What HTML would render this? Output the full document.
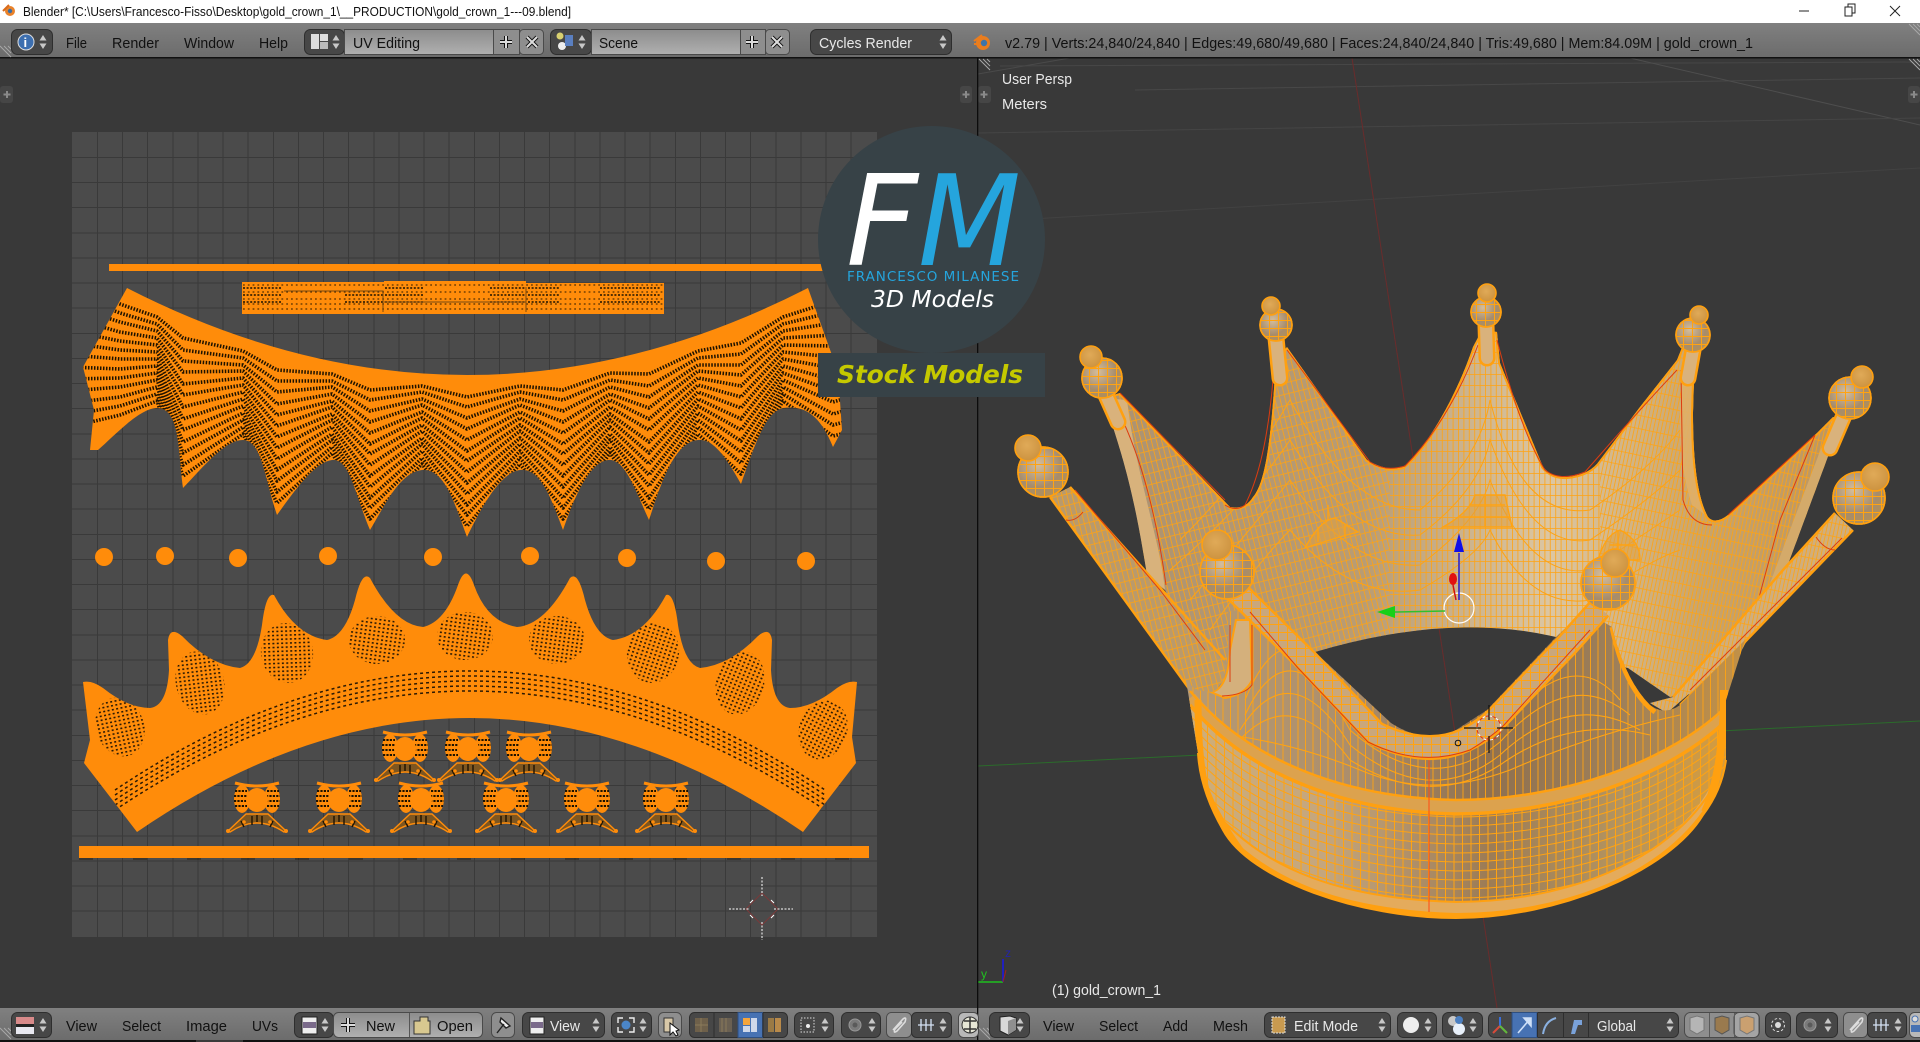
<!DOCTYPE html>
<html><head><meta charset="utf-8"><title>Blender</title>
<style>
html,body{margin:0;padding:0;background:#393939;overflow:hidden}
svg{display:block}
text{font-family:"Liberation Sans",sans-serif;font-size:14.5px;fill:#111}
.w{fill:#e8e8e8}
.d{fill:#474747;stroke:#2e2e2e}
.l{fill:url(#lg);stroke:#4a4a4a}
.g{fill:#8e8e8e;stroke:#4a4a4a}
</style></head><body>
<svg xmlns="http://www.w3.org/2000/svg" width="1920" height="1042" viewBox="0 0 1920 1042">
<defs>
<linearGradient id="hd" x1="0" y1="0" x2="0" y2="1"><stop offset="0" stop-color="#808080"/><stop offset="1" stop-color="#6c6c6c"/></linearGradient>
<linearGradient id="lg" x1="0" y1="0" x2="0" y2="1"><stop offset="0" stop-color="#8c8c8c"/><stop offset="1" stop-color="#b0b0b0"/></linearGradient>
<linearGradient id="back" x1="1100" y1="0" x2="1850" y2="0" gradientUnits="userSpaceOnUse"><stop offset="0" stop-color="#ab9272"/><stop offset=".35" stop-color="#b89c74"/><stop offset=".6" stop-color="#dcc6a2"/><stop offset=".8" stop-color="#c9a56c"/><stop offset="1" stop-color="#ba9460"/></linearGradient>
<linearGradient id="front" x1="1190" y1="0" x2="1730" y2="0" gradientUnits="userSpaceOnUse"><stop offset="0" stop-color="#b69a74"/><stop offset=".3" stop-color="#ab8e6c"/><stop offset=".55" stop-color="#8e7050"/><stop offset=".8" stop-color="#9e805a"/><stop offset="1" stop-color="#c09048"/></linearGradient>
<linearGradient id="bandg" x1="1190" y1="0" x2="1730" y2="0" gradientUnits="userSpaceOnUse"><stop offset="0" stop-color="#cfae78"/><stop offset=".25" stop-color="#c4a67e"/><stop offset=".55" stop-color="#9c7c56"/><stop offset=".8" stop-color="#b39460"/><stop offset="1" stop-color="#d69c3c"/></linearGradient>
<radialGradient id="ball" cx=".4" cy=".35" r=".75"><stop offset="0" stop-color="#d4bd9c"/><stop offset=".6" stop-color="#a68c6c"/><stop offset="1" stop-color="#b8914f"/></radialGradient>
<radialGradient id="cap" cx=".45" cy=".4" r=".7"><stop offset="0" stop-color="#e0aa58"/><stop offset="1" stop-color="#c98f3c"/></radialGradient>
<pattern id="pB" width="5.4" height="11" patternUnits="userSpaceOnUse"><path d="M.5 0V11M0 .5H5.4" stroke="#ffa312" stroke-width=".8" fill="none"/></pattern>
<pattern id="pBl" width="5" height="11" patternUnits="userSpaceOnUse" patternTransform="rotate(-14)"><path d="M.5 0V11M0 .5H5" stroke="#ffa312" stroke-width=".8" fill="none"/></pattern>
<pattern id="pBr" width="3.8" height="13" patternUnits="userSpaceOnUse" patternTransform="rotate(12)"><path d="M.5 0V13M0 .5H3.8" stroke="#ffa312" stroke-width=".8" fill="none"/></pattern>
<pattern id="pF" width="7.5" height="8" patternUnits="userSpaceOnUse"><path d="M.5 0V8" stroke="#ffa312" stroke-width=".9" fill="none"/></pattern>
<pattern id="pBd" width="8.5" height="8" patternUnits="userSpaceOnUse"><path d="M.5 0V8" stroke="#ffa312" stroke-width="1" fill="none"/></pattern>
<pattern id="pBall" width="9" height="8" patternUnits="userSpaceOnUse"><path d="M.5 0V8M0 .5H9" stroke="#ffa312" stroke-width="1" fill="none"/></pattern>
<pattern id="dots" width="4.4" height="4" patternUnits="userSpaceOnUse" patternTransform="rotate(8)"><rect width="2" height="1.6" fill="#2c1a04"/></pattern>
<clipPath id="cUp"><path d="M127,288 Q467,462 808,288 L838,372 L842,430 L833,447 C820,415 805,405 783,408 C765,412 755,445 741,484 C725,455 712,438 698,440 C675,442 662,480 649,520 C635,490 625,458 608,460 C590,462 575,495 563,530 C550,495 540,468 520,470 C500,472 480,510 467,537 C455,505 445,468 422,470 C400,472 385,505 370,530 C355,495 350,458 332,460 C315,462 295,490 277,515 C265,480 262,440 243,440 C225,440 205,465 183,488 C178,450 180,408 157,408 C140,408 115,435 98,450 L90,450 L94,410 L83,367 Z"/></clipPath>
<path id="low" d="M83,682 Q92,680 103,688 Q128,708 150,708 Q167,706 169,670 L168,640 Q170,626 182,636 Q210,665 240,668 Q256,664 262,625 Q266,592 274,595 Q296,636 327,640 Q345,636 355,600 Q362,570 370,578 Q395,625 423,627 Q445,622 458,585 Q466,562 474,585 Q487,622 517,627 Q545,625 570,578 Q578,570 585,600 Q595,636 613,640 Q644,636 666,595 Q674,592 678,625 Q684,664 700,668 Q730,665 758,636 Q770,626 772,640 L771,670 Q773,706 790,708 Q812,708 837,688 Q848,680 857,682 L852,737 L856,763 L803,832 Q470,604 137,832 L84,763 L90,740 Z"/>
<clipPath id="cLow"><use href="#low"/></clipPath>
<path id="ribbon" d="M115,800 Q470,562 825,800" fill="none" stroke="#2c1a04" stroke-width="1.5" stroke-dasharray="3 3"/>
<g id="fl">
<path d="M-11,6 L-29,23 L-27,24 Q0,6 27,24 L29,23 L11,6 Z" fill="#7e5620" stroke="#ff8c0a" stroke-width="1.4"/>
<path d="M-5,8 V17 M5,8 V17 M-16,13 L-13,19 M16,13 L13,19 M0,7 V14" stroke="#1d1200" stroke-width="1.4"/>
<path d="M-22,-25 Q0,-19 22,-25" fill="none" stroke="#ff8c0a" stroke-width="3"/>
<ellipse cx="-15" cy="-9" rx="8" ry="14" fill="#ff8c0a"/><ellipse cx="15" cy="-9" rx="8" ry="14" fill="#ff8c0a"/>
<path d="M-22,-17H-10M-23,-12H-9M-23,-7H-9M-22,-2H-10M10,-17H22M9,-12H23M9,-7H23M10,-2H22" stroke="#1d1200" stroke-width="2" stroke-dasharray="2.2 1.2"/>
<ellipse cx="0" cy="-8" rx="11" ry="12" fill="#ff8c0a"/>
<circle cx="-29" cy="23" r="2" fill="#ff8c0a"/><circle cx="29" cy="23" r="2" fill="#ff8c0a"/>
<circle cx="-13" cy="14" r="1.8" fill="#ff8c0a"/><circle cx="13" cy="14" r="1.8" fill="#ff8c0a"/>
</g>
<g id="ud"><path d="M-3.5,-1.5 L0,-7 L3.5,-1.5Z M-3.5,1.5 L0,7 L3.5,1.5Z" fill="#c8c8c8"/></g>
<g id="hatch"><path d="M0,0 L11,11 M4,0 L11,7 M8,0 L11,3" stroke="#a8a8a8" fill="none"/></g>
<path id="bc" d="M1190,715 C1250,785 1350,815 1456,817 C1560,817 1670,785 1730,725" fill="none" stroke="#ffa312" stroke-width="1"/>
<clipPath id="cBack"><path d="M1103,398 L1120,393 L1230,507 Q1245,510 1253,497 C1268,480 1272,420 1276,360 L1287,347 L1367,460 Q1387,472 1403,467 C1425,450 1455,400 1473,347 L1482,330 L1497,332 L1500,363 L1543,467 Q1552,478 1567,477 Q1590,475 1600,460 L1640,407 L1677,360 L1685,340 L1695,345 L1693,413 Q1693,490 1708,517 Q1715,525 1728,515 L1817,433 L1833,417 L1847,420 L1833,443 L1787,567 L1720,690 L1670,697 L1628,668 L1590,660 L1556,637 Q1450,612 1315,652 L1240,690 L1190,640 L1165,590 L1147,575 C1135,500 1125,460 1103,398 Z"/></clipPath>
<clipPath id="cFront"><path d="M1186,680 L1196,690 L1211,692 Q1225,690 1228,650 L1228,612 L1260,605 L1315,652 L1391,723 Q1425,745 1456,730 L1487,710 L1556,637 L1577,617 L1600,620 L1612,627 Q1625,680 1650,705 Q1665,716 1680,705 L1745,640 L1726,700 L1726,760 Q1722,790 1703,815 C1670,870 1560,918 1456,918 C1360,918 1250,880 1223,830 Q1200,790 1198,753 Z"/></clipPath>
</defs>

<rect width="1920" height="1042" fill="#393939"/>
<!-- title bar -->
<rect width="1920" height="23" fill="#fff"/>
<circle cx="10" cy="11" r="5" fill="#e9822a"/><circle cx="10" cy="11" r="2.2" fill="#3b6ea5"/><path d="M3,11 L9,5" stroke="#d86a1a" stroke-width="2"/>
<text x="23" y="16" style="font-size:12.5px" textLength="548" lengthAdjust="spacingAndGlyphs">Blender* [C:\Users\Francesco-Fisso\Desktop\gold_crown_1\__PRODUCTION\gold_crown_1---09.blend]</text>
<path d="M1799,11 H1809" stroke="#222"/>
<path d="M1845,7 h7 v9 h-7z M1848,7 v-3 h7 v9 h-3" fill="none" stroke="#222"/>
<path d="M1890,6 L1900,16 M1900,6 L1890,16" stroke="#222"/>

<!-- UV editor image -->
<rect x="72" y="132" width="805" height="805" fill="#4b4b4b"/>
<g stroke="#3a3a3a" stroke-width="1">
<path d="M97.5,132V937M122.5,132V937M147.5,132V937M173,132V937M198,132V937M223,132V937M248,132V937M273.5,132V937M298.5,132V937M323.5,132V937M348.5,132V937M374,132V937M399,132V937M424,132V937M449,132V937M474.5,132V937M499.5,132V937M524.5,132V937M549.5,132V937M575,132V937M600,132V937M625,132V937M650,132V937M675.5,132V937M700.5,132V937M725.5,132V937M750.5,132V937M776,132V937M801,132V937M826,132V937M851,132V937"/>
<path d="M72,157.5H877M72,182.5H877M72,207.5H877M72,233H877M72,258H877M72,283H877M72,308H877M72,333.5H877M72,358.5H877M72,383.5H877M72,408.5H877M72,434H877M72,459H877M72,484H877M72,509H877M72,534.5H877M72,559.5H877M72,584.5H877M72,609.5H877M72,635H877M72,660H877M72,685H877M72,710H877M72,735.5H877M72,760.5H877M72,785.5H877M72,810.5H877M72,836H877M72,861H877M72,886H877M72,911H877"/>
</g>

<!-- UV islands -->
<rect x="109" y="264" width="715" height="7" fill="#ff8c0a"/>
<g>
<rect x="242" y="282" width="142" height="32" fill="#ff8c0a"/><rect x="384" y="281" width="142" height="33" fill="#ff8c0a"/><rect x="526" y="283" width="138" height="31" fill="#ff8c0a"/>
<path d="M243,285H664M243,292H664M243,299H664M243,304H664M243,309H664" stroke="#1d1200" stroke-width="1.3" stroke-dasharray="1.8 3" opacity=".75"/>
<path d="M243,288H282M243,295H282M243,302H282M345,295H383M345,302H383M385,288H424M385,295H424M385,302H424M490,288H525M490,295H525M490,302H525M528,288H560M528,295H560M528,302H560M600,288H660M600,295H660M600,302H660" stroke="#1d1200" stroke-width="1.6" stroke-dasharray="2 1.6"/>
<path d="M284,291H383V312M384,302H526M526,287V312" stroke="#7a4a10" fill="none"/>
</g>
<g clip-path="url(#cUp)">
<rect x="70" y="280" width="800" height="270" fill="#ff8c0a"/>
<g stroke="#1d1200" stroke-width="3.6" stroke-dasharray="1.5 1.5" fill="none" stroke-linejoin="round">
<polyline points="70,282 120,304 157,317 183,338 243,351 277,370 332,374 370,390 422,386 467,397 520,386 563,390 610,373 649,374 698,351 741,343 783,317 833,301 870,282"/>
<polyline points="70,294 120,313 157,324 183,350 243,358 277,381 332,381 370,400 422,392 467,407 520,392 563,400 610,380 649,386 698,358 741,354 783,324 833,312 870,294"/>
<polyline points="70,306 120,322 157,331 183,361 243,365 277,392 332,387 370,411 422,399 467,418 520,399 563,411 610,387 649,397 698,365 741,365 783,331 833,323 870,306"/>
<polyline points="70,318 120,332 157,338 183,372 243,371 277,404 332,394 370,422 422,405 467,429 520,405 563,422 610,394 649,408 698,371 741,375 783,338 833,335 870,318"/>
<polyline points="70,331 120,341 157,345 183,384 243,378 277,415 332,401 370,433 422,412 467,440 520,412 563,433 610,400 649,419 698,378 741,386 783,345 833,346 870,331"/>
<polyline points="70,343 120,350 157,352 183,395 243,385 277,426 332,407 370,444 422,418 467,451 520,418 563,444 610,407 649,430 698,385 741,397 783,352 833,357 870,343"/>
<polyline points="70,355 120,359 157,359 183,407 243,392 277,437 332,414 370,454 422,425 467,461 520,425 563,454 610,414 649,442 698,392 741,408 783,359 833,368 870,355"/>
<polyline points="70,367 120,369 157,366 183,419 243,399 277,448 332,420 370,465 422,431 467,472 520,431 563,465 610,420 649,453 698,399 741,419 783,366 833,380 870,367"/>
<polyline points="70,379 120,378 157,373 183,430 243,406 277,459 332,427 370,476 422,438 467,483 520,438 563,476 610,427 649,464 698,406 741,430 783,373 833,391 870,379"/>
<polyline points="70,391 120,387 157,380 183,442 243,413 277,470 332,434 370,487 422,444 467,494 520,444 563,487 610,434 649,475 698,413 741,441 783,380 833,402 870,391"/>
<polyline points="70,403 120,397 157,387 183,453 243,420 277,481 332,440 370,498 422,451 467,505 520,451 563,498 610,440 649,486 698,420 741,452 783,387 833,414 870,403"/>
<polyline points="70,415 120,406 157,394 183,465 243,427 277,492 332,447 370,508 422,458 467,515 520,458 563,508 610,447 649,498 698,427 741,463 783,394 833,425 870,415"/>
<polyline points="70,427 120,415 157,401 183,476 243,434 277,503 332,453 370,519 422,464 467,526 520,464 563,519 610,453 649,509 698,434 741,474 783,401 833,436 870,427"/>
</g>
</g>
<g fill="#ff8c0a"><circle cx="104" cy="557" r="9"/><circle cx="165" cy="556" r="9"/><circle cx="238" cy="558" r="9"/><circle cx="328" cy="556" r="9"/><circle cx="433" cy="557" r="9"/><circle cx="530" cy="556" r="9"/><circle cx="627" cy="558" r="9"/><circle cx="716" cy="561" r="9"/><circle cx="806" cy="561" r="9"/></g>
<use href="#low" fill="#ff8c0a"/>
<g clip-path="url(#cLow)">
<g fill="url(#dots)">
<ellipse cx="120" cy="727" rx="24" ry="30" transform="rotate(-20 120 727)"/>
<ellipse cx="200" cy="683" rx="24" ry="32" transform="rotate(-15 200 683)"/>
<ellipse cx="287" cy="653" rx="26" ry="30" transform="rotate(-10 287 653)"/>
<ellipse cx="377" cy="640" rx="28" ry="24"/>
<ellipse cx="465" cy="636" rx="28" ry="24"/>
<ellipse cx="557" cy="640" rx="28" ry="24"/>
<ellipse cx="653" cy="653" rx="26" ry="30" transform="rotate(10 653 653)"/>
<ellipse cx="740" cy="683" rx="24" ry="32" transform="rotate(15 740 683)"/>
<ellipse cx="823" cy="730" rx="24" ry="30" transform="rotate(20 823 730)"/>
</g>
<use href="#ribbon" y="-10"/><use href="#ribbon" y="-5"/><use href="#ribbon"/><use href="#ribbon" y="5"/><use href="#ribbon" y="10"/>
</g>
<use href="#fl" x="257" y="808"/><use href="#fl" x="339" y="808"/><use href="#fl" x="421" y="808"/><use href="#fl" x="506" y="808"/><use href="#fl" x="587" y="808"/><use href="#fl" x="666" y="808"/>
<use href="#fl" x="405" y="757"/><use href="#fl" x="468" y="757"/><use href="#fl" x="529" y="757"/>
<rect x="79" y="846" width="790" height="12" fill="#ff8c0a"/>
<path d="M79,859H869" stroke="#1d1200" stroke-dasharray="14 40" opacity=".7"/>
<!-- 2D cursor -->
<g fill="none">
<path d="M762,893 L778,909 L762,925 L746,909 Z" stroke="#7a3a3a"/>
<path d="M729,909H750M774,909H793M762,877V896M762,922V940" stroke="#fff" stroke-dasharray="2 1.5"/>
<path d="M753,900L750,903M771,900L774,903M753,918L750,915M771,918L774,915" stroke="#fff"/>
</g>

<!-- 3D viewport background lines -->
<g fill="none" stroke-width="1">
<path d="M978,74 L1070,58" stroke="#4a4a4a"/>
<path d="M1000,66 L1920,62" stroke="#474747"/>
<path d="M1135,90 L1920,78" stroke="#484848"/>
<path d="M1630,58 L1920,125" stroke="#4e4e4e"/>
<path d="M978,133 L1920,118" stroke="#454545"/>
<path d="M978,222 L1920,168" stroke="#424242"/>
<path d="M1352,58 L1497,1008" stroke="#6a2c2c"/>
<path d="M978,766 L1200,755 M1720,731 L1920,721" stroke="#2b6b2b"/>
</g>

<!-- crown back -->
<g clip-path="url(#cBack)">
<rect x="1090" y="320" width="770" height="400" fill="url(#back)"/>
<rect x="1090" y="320" width="300" height="400" fill="url(#pBl)"/>
<rect x="1390" y="320" width="210" height="400" fill="url(#pB)"/>
<rect x="1600" y="320" width="260" height="400" fill="url(#pBr)"/>
<g fill="none" stroke="#ffa312" stroke-width="1">
<path d="M1180,540 Q1250,470 1290,400 Q1350,510 1420,510 Q1480,460 1490,400 Q1520,520 1590,510 Q1650,470 1680,430"/>
<path d="M1170,570 Q1250,500 1290,440 Q1350,540 1420,535 Q1480,490 1490,440 Q1530,550 1590,540 Q1650,500 1680,470"/>
<path d="M1190,600 Q1250,530 1290,480 Q1350,570 1420,565 Q1480,520 1490,480 Q1530,580 1590,570 Q1650,530 1680,510"/>
<path d="M1210,630 Q1260,560 1290,530 Q1350,600 1420,590 Q1480,555 1490,530 Q1530,610 1590,600 Q1650,560 1680,550"/>
</g>
<path d="M1127,400 C1135,470 1160,540 1165,590 L1147,575 C1135,500 1125,460 1103,398Z" fill="#d8b27c"/>
<path d="M1682,360 L1695,345 L1693,413 Q1693,490 1708,517 L1692,505 Q1680,470 1680,420Z" fill="#dfaf68" opacity=".9"/>
<path d="M1833,417 L1847,420 L1833,443 L1787,567 L1760,610 L1790,530Z" fill="#d4aa6a"/>
<path d="M1103,398 L1120,393 L1230,507 Q1245,510 1253,497 C1268,480 1272,420 1276,360 L1287,347 L1367,460 Q1387,472 1403,467 C1425,450 1455,400 1473,347 L1482,330 L1497,332 L1500,363 L1543,467 Q1552,478 1567,477 Q1590,475 1600,460 L1640,407 L1677,360 L1685,340 M1695,345 L1693,413 Q1693,490 1708,517 Q1715,525 1728,515 L1817,433 L1833,417" fill="none" stroke="#ffa010" stroke-width="4"/>
<g fill="#e0a040" fill-opacity=".55" stroke="#ffa312" stroke-width="1.4">
<path d="M1305,548 Q1320,520 1335,518 L1358,532 Q1335,538 1305,548 Z M1328,505 V520 M1318,527 V542 M1345,525 V538"/>
<path d="M1443,527 Q1470,512 1475,495 L1505,495 L1512,527 Z M1470,505 H1505 M1460,517 H1510 M1485,495 V527"/>
<path d="M1598,560 Q1605,535 1620,530 Q1640,540 1640,560 Z M1610,545 H1635 M1618,530 V560"/>
</g>
</g>
<path d="M1115,405 Q1150,470 1166,585 M1274,365 Q1268,460 1245,505 Q1236,512 1225,505 M1120,393 L1225,500 M1287,350 L1370,462 Q1385,472 1405,466 Q1450,420 1478,345 M1497,340 Q1520,430 1545,470 Q1560,482 1585,472 Q1630,420 1677,370 M1681,370 L1683,500 Q1690,525 1712,525 M1815,435 L1780,520 L1757,605 M1728,515 L1815,435" fill="none" stroke="#dd3c10" stroke-width="1"/>

<!-- necks -->
<g fill="none" stroke-linecap="round">
<path d="M1276,338 L1280,378 M1486,325 L1487,358 M1693,350 L1688,378 M1106,395 L1118,422 M1845,413 L1830,448" stroke="#ffa010" stroke-width="17"/>
<path d="M1276,338 L1280,378 M1486,325 L1487,358 M1693,350 L1688,378 M1106,395 L1118,422 M1845,413 L1830,448" stroke="#d9b27c" stroke-width="12"/>
</g>

<!-- arm 1 -->
<path d="M1050,497 L1070,487 L1147,573 L1230,670 L1210,700 L1190,690 Z" fill="#b99a6c"/>
<path d="M1050,497 L1070,487 L1147,573 L1230,670 L1210,700 L1190,690 Z" fill="url(#pBl)"/>
<path d="M1070,487 L1147,573 L1225,660 M1050,497 L1190,690" fill="none" stroke="#ffa010" stroke-width="2.5"/>
<path d="M1066,520 Q1075,522 1083,512 M1075,490 L1160,590 L1205,650" fill="none" stroke="#dd3c10" stroke-width="1"/>
<!-- arm 7 -->
<path d="M1835,513 L1853,530 L1830,553 L1740,647 L1713,673 L1667,713 L1650,703 L1673,697 L1783,570 Z" fill="#d0ae7c"/>
<path d="M1835,513 L1853,530 L1830,553 L1740,647 L1713,673 L1667,713 L1650,703 L1673,697 L1783,570 Z" fill="url(#pBr)"/>
<path d="M1835,513 L1783,570 L1673,697 M1853,530 L1740,647 L1680,705" fill="none" stroke="#ffa010" stroke-width="2.5"/>
<path d="M1816,537 Q1825,550 1835,550 M1842,538 L1730,650 L1690,690" fill="none" stroke="#dd3c10" stroke-width="1"/>

<!-- crown front -->
<g clip-path="url(#cFront)">
<rect x="1180" y="600" width="570" height="330" fill="url(#front)"/>
<rect x="1180" y="600" width="570" height="330" fill="url(#pF)"/>
<g fill="none" stroke="#ffa312" stroke-width="1.1">
<path d="M1245,700 Q1290,590 1350,715 Q1430,790 1500,730 Q1570,640 1620,700"/>
<path d="M1245,715 Q1290,620 1350,730 Q1430,800 1500,742 Q1570,665 1630,715"/>
<path d="M1240,730 Q1290,650 1350,745 Q1430,810 1500,755 Q1570,690 1640,730"/>
<path d="M1235,745 Q1290,680 1350,760 Q1430,810 1500,765 Q1570,715 1650,735"/>
<path d="M1230,735 Q1300,745 1360,770 Q1430,800 1510,770 Q1590,735 1680,715"/>
</g>
<path d="M1190,698 C1250,770 1350,805 1456,807 C1560,807 1670,770 1730,710 L1730,930 L1190,930 Z" fill="url(#bandg)"/>
<path d="M1190,698 C1250,770 1350,805 1456,807 C1560,807 1670,770 1730,710 L1730,930 L1190,930 Z" fill="url(#pBd)"/>
<use href="#bc"/><use href="#bc" y="9"/><use href="#bc" y="18"/><use href="#bc" y="27"/><use href="#bc" y="36"/><use href="#bc" y="45"/><use href="#bc" y="54"/><use href="#bc" y="63"/><use href="#bc" y="72"/><use href="#bc" y="81"/>
<path d="M1190,698 C1250,770 1350,805 1456,807 C1560,807 1670,770 1730,710" fill="none" stroke="#dca24e" stroke-width="13"/>
<path d="M1190,691 C1250,763 1350,798 1456,800 C1560,800 1670,763 1730,703" fill="none" stroke="#ffa010" stroke-width="2.5"/>
<path d="M1190,705 C1250,777 1350,812 1456,814 C1560,814 1670,777 1730,717" fill="none" stroke="#ffa010" stroke-width="3.5"/>
<path d="M1205,805 C1260,880 1350,905 1456,908 C1560,908 1670,870 1715,790" fill="none" stroke="#e4ab5c" stroke-width="11"/>
<path d="M1205,799 C1260,874 1350,899 1456,902 C1560,902 1670,864 1715,784" fill="none" stroke="#ffa010" stroke-width="2"/>
<path d="M1205,812 C1260,887 1350,913 1456,916 C1560,916 1670,878 1715,797" fill="none" stroke="#ffa010" stroke-width="6"/>
<path d="M1198,700 Q1198,760 1206,790 Q1215,815 1240,850" fill="none" stroke="#ffa010" stroke-width="7"/>
<path d="M1724,690 Q1724,770 1705,812" fill="none" stroke="#ffa010" stroke-width="8"/>
<path d="M1612,627 Q1625,690 1655,712" fill="none" stroke="#ffa010" stroke-width="5"/>
<path d="M1236,620 L1250,620 L1252,680 Q1245,695 1225,698 L1211,692 Q1228,690 1230,650 Z" fill="#d4b07c" stroke="#ffa010" stroke-width="2"/>
<path d="M1230,625 V682 M1252,625 V685 Q1245,695 1222,696" fill="none" stroke="#dd3c10"/>
<path d="M1429,760 V912" stroke="#ff4a12" stroke-width="1"/>
</g>
<path d="M1198,753 Q1200,790 1223,830 C1250,880 1360,918 1456,918 C1560,918 1670,870 1703,815 Q1722,790 1726,760" fill="none" stroke="#ffa010" stroke-width="2"/>

<!-- balls back -->
<g stroke="#ffa010" stroke-width="1.6">
<g><circle cx="1693" cy="335" r="17" fill="url(#ball)"/><circle cx="1693" cy="335" r="17" fill="url(#pBall)"/><circle cx="1699" cy="315" r="9" fill="url(#cap)"/></g>
<g><circle cx="1486" cy="312" r="15" fill="url(#ball)"/><circle cx="1486" cy="312" r="15" fill="url(#pBall)"/><circle cx="1487" cy="293" r="9" fill="url(#cap)"/></g>
<g><circle cx="1276" cy="325" r="16" fill="url(#ball)"/><circle cx="1276" cy="325" r="16" fill="url(#pBall)"/><circle cx="1271" cy="306" r="9" fill="url(#cap)"/></g>
<g><circle cx="1102" cy="378" r="20" fill="url(#ball)"/><circle cx="1102" cy="378" r="20" fill="url(#pBall)"/><circle cx="1091" cy="357" r="11" fill="url(#cap)"/></g>
<g><circle cx="1043" cy="472" r="25" fill="url(#ball)"/><circle cx="1043" cy="472" r="25" fill="url(#pBall)"/><circle cx="1028" cy="448" r="13" fill="url(#cap)"/></g>
<g><circle cx="1850" cy="398" r="21" fill="url(#ball)"/><circle cx="1850" cy="398" r="21" fill="url(#pBall)"/><circle cx="1862" cy="377" r="11" fill="url(#cap)"/></g>
<g><circle cx="1859" cy="498" r="26" fill="url(#ball)"/><circle cx="1859" cy="498" r="26" fill="url(#pBall)"/><circle cx="1875" cy="477" r="14" fill="url(#cap)"/></g>
</g>
<!-- rim of front arms -->
<g fill="none" stroke-linejoin="round">
<path d="M1235,590 L1306,660 L1375,733 Q1425,758 1465,740 Q1485,730 1497,718 L1566,646 L1600,608" stroke="#ffa010" stroke-width="25"/>
<path d="M1235,590 L1306,660 L1375,733 Q1425,758 1465,740 Q1485,730 1497,718 L1566,646 L1600,608" stroke="#c9a77c" stroke-width="20"/>
<path d="M1235,590 L1306,660 L1375,733 Q1425,758 1465,740 Q1485,730 1497,718 L1566,646 L1600,608" stroke="url(#pBall)" stroke-width="20"/>
<path d="M1250,612 L1298,668 L1368,742 Q1420,768 1470,750 Q1490,738 1504,725 L1590,630" stroke="#dd3c10"/>
</g>
<g stroke="#ffa010" stroke-width="1.6">
<g><circle cx="1227" cy="572" r="27" fill="url(#ball)"/><circle cx="1227" cy="572" r="27" fill="url(#pBall)"/><circle cx="1217" cy="545" r="15" fill="url(#cap)"/></g>
<g><circle cx="1608" cy="583" r="27" fill="url(#ball)"/><circle cx="1608" cy="583" r="27" fill="url(#pBall)"/><circle cx="1615" cy="563" r="14" fill="url(#cap)"/></g>
</g>

<!-- manipulator -->
<circle cx="1459" cy="608" r="15" fill="none" stroke="#fff" stroke-width="1.2"/>
<path d="M1459,600 V553" stroke="#1a1ae0" stroke-width="1.5"/><path d="M1454,552 L1459,533 L1464,552Z" fill="#1010e8"/>
<path d="M1445,611 L1395,612" stroke="#2fc02f" stroke-width="1.5"/><path d="M1377,612 L1395,606 L1395,618Z" fill="#18d018"/>
<path d="M1456,600 L1453,585" stroke="#d01010" stroke-width="1.5"/><ellipse cx="1453" cy="579" rx="4" ry="6" fill="#e01010"/>
<!-- 3D cursor -->
<circle cx="1489" cy="728" r="12" fill="none" stroke="#fff" stroke-dasharray="4 3"/>
<circle cx="1489" cy="728" r="12" fill="none" stroke="#e03010" stroke-dasharray="4 3" stroke-dashoffset="3.5"/>
<path d="M1464,728H1481M1497,728H1513M1489,705V720M1489,736V753" stroke="#111" stroke-width="1.2"/>
<circle cx="1458" cy="743" r="2.8" fill="none" stroke="#111"/>

<!-- viewport text -->
<text class="w" x="1002" y="84" textLength="70" lengthAdjust="spacingAndGlyphs">User Persp</text>
<text class="w" x="1002" y="109" textLength="45" lengthAdjust="spacingAndGlyphs">Meters</text>
<text class="w" x="1052" y="995" textLength="109" lengthAdjust="spacingAndGlyphs">(1) gold_crown_1</text>
<path d="M978,982 H1003" stroke="#1fc01f" stroke-width="1.6"/><path d="M1003,982 V959" stroke="#1a1ae0" stroke-width="1.6"/><path d="M1003,982 L1006,970" stroke="#a02020"/>
<text x="981" y="978" style="font-size:12px;fill:#20c020">y</text>
<text x="1005" y="957" style="font-size:12px;fill:#2424a8">z</text>

<!-- side tabs -->
<g fill="#464646"><rect x="0" y="86" width="13" height="17" rx="3"/><rect x="960" y="86" width="12" height="17" rx="3"/><rect x="978" y="86" width="13" height="17" rx="3"/><rect x="1908" y="86" width="12" height="17" rx="3"/></g>
<g fill="#8a8a8a"><path d="M7,91v7M3.5,94.5h7" stroke="#8a8a8a" stroke-width="2"/><path d="M966,91v7M962.5,94.5h7" stroke="#8a8a8a" stroke-width="2"/><path d="M984,91v7M980.5,94.5h7" stroke="#8a8a8a" stroke-width="2"/><path d="M1914,91v7M1910.5,94.5h7" stroke="#8a8a8a" stroke-width="2"/></g>

<!-- header -->
<rect x="0" y="23" width="1920" height="34" fill="url(#hd)"/>
<rect x="0" y="57" width="1920" height="1.5" fill="#111"/>
<rect x="977" y="57" width="1.3" height="983" fill="#0c0c0c"/>
<use href="#hatch" x="0" y="46"/><use href="#hatch" x="1909" y="24"/><use href="#hatch" x="979" y="59"/><use href="#hatch" x="1909" y="59"/>
<rect class="d" x="11.5" y="29.5" width="41" height="25" rx="6"/>
<circle cx="26" cy="42" r="8" fill="#3d6fb0" stroke="#ddd"/><text x="23.5" y="47" style="font-size:13px;font-weight:bold;fill:#fff">i</text>
<use href="#ud" x="43" y="42"/>
<text x="66" y="48" textLength="21" lengthAdjust="spacingAndGlyphs">File</text>
<text x="112" y="48" textLength="47" lengthAdjust="spacingAndGlyphs">Render</text>
<text x="184" y="48" textLength="50" lengthAdjust="spacingAndGlyphs">Window</text>
<text x="259" y="48" textLength="29" lengthAdjust="spacingAndGlyphs">Help</text>

<rect class="d" x="304.5" y="29.5" width="40" height="25" rx="6"/>
<rect x="311" y="34" width="8" height="15" fill="#ddd"/><rect x="320" y="34" width="8" height="7" fill="#ddd"/><rect x="320" y="42" width="8" height="7" fill="#bbb"/>
<use href="#ud" x="336" y="42"/>
<rect class="l" x="344.5" y="29.5" width="149" height="25"/>
<text x="353" y="48" textLength="67" lengthAdjust="spacingAndGlyphs">UV Editing</text>
<rect class="g" x="493.5" y="29.5" width="26" height="25"/><rect class="g" x="519.5" y="29.5" width="24" height="25" rx="4"/>
<path d="M506,36v12M500,42h12" stroke="#111" stroke-width="4"/><path d="M506,36v12M500,42h12" stroke="#ddd" stroke-width="2"/>
<path d="M527,37l10,10M537,37l-10,10" stroke="#111" stroke-width="4"/><path d="M527,37l10,10M537,37l-10,10" stroke="#ddd" stroke-width="2"/>

<rect class="d" x="550.5" y="29.5" width="41" height="25" rx="6"/>
<circle cx="560" cy="36" r="3.5" fill="#d8d070"/><circle cx="562" cy="46" r="4" fill="#eee"/><rect x="565" y="35" width="8" height="11" fill="#5a7fc0"/>
<use href="#ud" x="582" y="42"/>
<rect class="l" x="591.5" y="29.5" width="149" height="25"/>
<text x="599" y="48" textLength="39" lengthAdjust="spacingAndGlyphs">Scene</text>
<rect class="g" x="740.5" y="29.5" width="25" height="25"/><rect class="g" x="765.5" y="29.5" width="24" height="25" rx="4"/>
<path d="M752,36v12M746,42h12" stroke="#111" stroke-width="4"/><path d="M752,36v12M746,42h12" stroke="#ddd" stroke-width="2"/>
<path d="M772,37l10,10M782,37l-10,10" stroke="#111" stroke-width="4"/><path d="M772,37l10,10M782,37l-10,10" stroke="#ddd" stroke-width="2"/>

<rect class="d" x="810.5" y="29.5" width="141" height="25" rx="6"/>
<text class="w" x="819" y="48" textLength="93" lengthAdjust="spacingAndGlyphs">Cycles Render</text>
<use href="#ud" x="943" y="42"/>

<circle cx="983" cy="43" r="7" fill="#ea7d1e"/><circle cx="984" cy="43" r="3.2" fill="#3f74a8"/><path d="M974,41 L982,35 M974,44 L979,44" stroke="#ea7d1e" stroke-width="2"/>
<text x="1005" y="48" textLength="748" lengthAdjust="spacingAndGlyphs">v2.79 | Verts:24,840/24,840 | Edges:49,680/49,680 | Faces:24,840/24,840 | Tris:49,680 | Mem:84.09M | gold_crown_1</text>

<!-- footer -->
<rect x="0" y="1008" width="1920" height="32" fill="url(#hd)"/>
<rect x="0" y="1040" width="1920" height="2" fill="#111"/>
<rect x="196" y="1040" width="47" height="2" fill="#3a3a3a"/>
<rect x="977" y="1008" width="1.3" height="32" fill="#0c0c0c"/>
<use href="#hatch" x="0" y="1028"/><use href="#hatch" x="979" y="1028"/>

<rect class="d" x="11.5" y="1012.5" width="40" height="25" rx="6"/>
<rect x="16" y="1017" width="18" height="7" fill="#d88a8a"/><rect x="16" y="1024" width="18" height="3" fill="#222"/><rect x="16" y="1027" width="18" height="7" fill="#e8e8f0"/>
<use href="#ud" x="43" y="1025"/>
<text x="66" y="1031" textLength="31" lengthAdjust="spacingAndGlyphs">View</text>
<text x="122" y="1031" textLength="39" lengthAdjust="spacingAndGlyphs">Select</text>
<text x="186" y="1031" textLength="41" lengthAdjust="spacingAndGlyphs">Image</text>
<text x="252" y="1031" textLength="26" lengthAdjust="spacingAndGlyphs">UVs</text>

<rect class="d" x="294.5" y="1012.5" width="39" height="25" rx="6"/>
<rect x="302" y="1017" width="15" height="17" fill="#eee" stroke="#222"/><rect x="303" y="1022" width="13" height="6" fill="#7a6a8a"/>
<use href="#ud" x="325" y="1025"/>
<rect class="l" x="333.5" y="1012.5" width="149" height="25" rx="5"/>
<path d="M348,1018v14M341,1025h14" stroke="#111" stroke-width="4"/><path d="M348,1018v14M341,1025h14" stroke="#ddd" stroke-width="2"/>
<text x="366" y="1031" textLength="29" lengthAdjust="spacingAndGlyphs">New</text>
<path d="M409.5,1013v24" stroke="#555"/>
<path d="M414,1021h6v-4h8v4h2v13h-16z" fill="#d8c890" stroke="#333"/>
<text x="437" y="1031" textLength="36" lengthAdjust="spacingAndGlyphs">Open</text>

<rect class="g" x="491.5" y="1012.5" width="23" height="25" rx="5"/>
<path d="M497,1033 L504,1024 M501,1018 L510,1026 L506,1028 L500,1022Z" stroke="#222" fill="#eee" stroke-width="1.4"/>
<rect class="d" x="522.5" y="1012.5" width="82" height="25" rx="6"/>
<rect x="530" y="1017" width="14" height="17" fill="#eee" stroke="#222"/><rect x="531" y="1022" width="12" height="6" fill="#7a6a8a"/>
<text class="w" x="550" y="1031" textLength="30" lengthAdjust="spacingAndGlyphs">View</text>
<use href="#ud" x="596" y="1025"/>
<rect class="d" x="611.5" y="1012.5" width="40" height="25" rx="6"/>
<circle cx="626" cy="1025" r="4.5" fill="#4b86c8"/><path d="M618,1023v-5h5M634,1023v-5h-5M618,1027v5h5M634,1027v5h-5" fill="none" stroke="#eee" stroke-width="1.4"/>
<use href="#ud" x="643" y="1025"/>
<rect class="g" x="658.5" y="1012.5" width="23" height="25" rx="5"/>
<path d="M664,1018h9v14h-9z" fill="#d8c8a8" stroke="#333"/><path d="M670,1023 L670,1035 L673,1032 L676,1036 L678,1035 L676,1031 L679,1030Z" fill="#fff" stroke="#111"/>
<rect class="d" x="689.5" y="1012.5" width="98" height="25" rx="5"/>
<rect x="738" y="1012.5" width="24.5" height="25" fill="#4772b3" stroke="#2e4f80"/>
<path d="M714,1013v24M763,1013v24" stroke="#2e2e2e"/>
<rect x="695" y="1018" width="13" height="14" fill="#6e604a"/><path d="M695,1025h13M701,1018v14" stroke="#8a7a5a"/>
<rect x="719" y="1018" width="13" height="14" fill="#6a6052"/><path d="M722,1018v14M726,1018v14" stroke="#8a7a5a"/>
<rect x="743" y="1018" width="7" height="7" fill="#f5a53c"/><rect x="743" y="1026" width="7" height="6" fill="#cfd8ea"/><rect x="751" y="1018" width="6" height="14" fill="#cfd8ea"/><rect x="768" y="1018" width="6" height="14" fill="#9b7a45"/><rect x="775" y="1018" width="6" height="14" fill="#b98a4a"/>
<rect class="d" x="794.5" y="1012.5" width="39" height="25" rx="6"/>
<rect x="801" y="1018" width="13" height="14" fill="none" stroke="#ddd" stroke-dasharray="1.5 1.5"/><circle cx="808" cy="1026" r="2" fill="#eee"/>
<use href="#ud" x="825" y="1025"/>
<rect class="d" x="841.5" y="1012.5" width="39" height="25" rx="6"/>
<circle cx="855" cy="1025" r="6" fill="#7a7a7a" stroke="#999"/><circle cx="855" cy="1025" r="2.5" fill="#5a5a5a"/>
<use href="#ud" x="872" y="1025"/>
<rect class="g" x="886.5" y="1012.5" width="25" height="25" rx="5"/>
<path d="M893,1030 L903,1019 Q907,1016 905,1022 L897,1031 Q893,1034 895,1029 L902,1022" fill="none" stroke="#ddd" stroke-width="1.6"/>
<rect class="d" x="911.5" y="1012.5" width="40" height="25" rx="5"/>
<path d="M918,1025h16M921,1019v12M926,1019v12M931,1019v12" stroke="#d5e3f5" stroke-width="1.3"/>
<use href="#ud" x="943" y="1025"/>
<rect class="g" x="958.5" y="1012.5" width="20" height="25" rx="5" style="fill:#b8b8b8"/>
<circle cx="970" cy="1025" r="8" fill="#e6e6d6" stroke="#333"/><path d="M964,1021h12M964,1029h12M970,1017v16" stroke="#333" stroke-width="1.5"/>

<rect class="d" x="989.5" y="1012.5" width="40" height="25" rx="6"/>
<path d="M1000,1017 L1010,1016 L1016,1018 L1016,1030 L1008,1035 L1000,1031Z" fill="#d8d8d8" stroke="#222"/><path d="M1008,1035 V1021 L1016,1018 V1030Z" fill="#8f8f8f"/>
<use href="#ud" x="1020" y="1025"/>
<text x="1043" y="1031" textLength="31" lengthAdjust="spacingAndGlyphs">View</text>
<text x="1099" y="1031" textLength="39" lengthAdjust="spacingAndGlyphs">Select</text>
<text x="1163" y="1031" textLength="25" lengthAdjust="spacingAndGlyphs">Add</text>
<text x="1213" y="1031" textLength="35" lengthAdjust="spacingAndGlyphs">Mesh</text>

<rect class="d" x="1264.5" y="1012.5" width="126" height="25" rx="6"/>
<rect x="1272" y="1017" width="13" height="16" fill="#c89a50" stroke="#ddd" stroke-dasharray="2 1"/>
<text class="w" x="1294" y="1031" textLength="64" lengthAdjust="spacingAndGlyphs">Edit Mode</text>
<use href="#ud" x="1382" y="1025"/>
<rect class="d" x="1397.5" y="1012.5" width="39" height="25" rx="6"/>
<circle cx="1411" cy="1025" r="8" fill="#eee"/><use href="#ud" x="1428" y="1025"/>
<rect class="d" x="1442.5" y="1012.5" width="40" height="25" rx="6"/>
<circle cx="1453" cy="1021" r="5" fill="#c8c8c8"/><circle cx="1459" cy="1029" r="6" fill="#e8f0fa"/><circle cx="1459" cy="1020" r="4" fill="#4a7ec0"/>
<use href="#ud" x="1473" y="1025"/>
<rect class="d" x="1488.5" y="1012.5" width="190" height="25" rx="6"/>
<rect x="1512" y="1012.5" width="25" height="25" fill="#4772b3" stroke="#2e4f80"/>
<path d="M1563.5,1013v24M1588.5,1013v24M1537.5,1013v24" stroke="#2e2e2e"/>
<path d="M1500,1026 V1017" stroke="#3a6fd8" stroke-width="2"/><path d="M1500,1026 L1493,1033" stroke="#d84a3a" stroke-width="2"/><path d="M1500,1026 L1507,1033" stroke="#64b83c" stroke-width="2"/>
<path d="M1518,1033 L1530,1019 M1524,1018 H1531 V1026 Z" stroke="#cfe0f8" fill="#cfe0f8" stroke-width="1.6"/>
<path d="M1543,1034 Q1545,1021 1556,1018" fill="none" stroke="#8ab0e0" stroke-width="2"/>
<path d="M1571,1034 L1574,1020 H1582 V1025 H1578 L1575,1034Z" fill="#7aa2da"/>
<text class="w" x="1597" y="1031" textLength="39" lengthAdjust="spacingAndGlyphs">Global</text>
<use href="#ud" x="1670" y="1025"/>
<rect class="g" x="1684.5" y="1012.5" width="75" height="25" rx="6"/>
<rect x="1734" y="1012.5" width="25" height="25" rx="5" fill="#a4a4a4" stroke="#4a4a4a"/>
<path d="M1709.5,1013v24M1734.5,1013v24" stroke="#5a5a5a"/>
<path d="M1690,1018 L1697,1016 L1704,1018 V1030 L1697,1034 L1690,1030Z" fill="#b5b5b5" stroke="#777"/>
<path d="M1715,1018 L1722,1016 L1729,1018 V1030 L1722,1034 L1715,1030Z" fill="#9a7a4e" stroke="#555"/>
<path d="M1740,1018 L1747,1016 L1754,1018 V1030 L1747,1034 L1740,1030Z" fill="#caa070" stroke="#777"/>
<rect class="d" x="1765.5" y="1012.5" width="25" height="25" rx="6"/>
<circle cx="1778" cy="1025" r="6.5" fill="none" stroke="#ddd" stroke-dasharray="2.5 2"/><circle cx="1778" cy="1025" r="3" fill="#ddd"/>
<rect class="d" x="1796.5" y="1012.5" width="41" height="25" rx="6"/>
<circle cx="1810" cy="1025" r="6" fill="#7a7a7a" stroke="#999"/><circle cx="1810" cy="1025" r="2.5" fill="#5a5a5a"/>
<use href="#ud" x="1828" y="1025"/>
<rect class="g" x="1843.5" y="1012.5" width="24" height="25" rx="5"/>
<path d="M1850,1030 L1860,1019 Q1864,1016 1862,1022 L1854,1031 Q1850,1034 1852,1029 L1859,1022" fill="none" stroke="#ddd" stroke-width="1.6"/>
<rect class="d" x="1867.5" y="1012.5" width="39" height="25" rx="5"/>
<path d="M1873,1025h16M1876,1019v12M1881,1019v12M1886,1019v12" stroke="#d5e3f5" stroke-width="1.3"/>
<use href="#ud" x="1898" y="1025"/>
<rect class="g" x="1909.5" y="1012.5" width="15" height="25" rx="5" style="fill:#b8b8b8"/>
<circle cx="1915" cy="1019" r="3" fill="#ddd" stroke="#4772b3"/><rect x="1911" y="1025" width="9" height="7" fill="#4772b3"/>

<!-- logo (on top of everything) -->
<circle cx="931.5" cy="239.5" r="113.5" fill="#374247"/>
<rect x="818" y="353" width="227" height="44" fill="#374247"/>
<text x="846" y="265" textLength="72" lengthAdjust="spacingAndGlyphs" style='font-family:"DejaVu Sans",sans-serif;font-style:italic;font-size:126px;fill:#fff'>F</text>
<text x="918" y="265" textLength="103" lengthAdjust="spacingAndGlyphs" style='font-family:"DejaVu Sans",sans-serif;font-style:italic;font-size:126px;fill:#25a5dd'>M</text>
<text x="847" y="281" textLength="172" style='font-family:"DejaVu Sans",sans-serif;font-size:13.5px;fill:#25a5dd'>FRANCESCO MILANESE</text>
<text x="871" y="307" textLength="123" lengthAdjust="spacingAndGlyphs" style='font-family:"DejaVu Sans",sans-serif;font-style:italic;font-size:23px;fill:#fff'>3D Models</text>
<text x="837" y="383" textLength="186" style='font-family:"DejaVu Sans",sans-serif;font-style:italic;font-weight:bold;font-size:25px;fill:#c5c900'>Stock Models</text>
</svg>
</body></html>
